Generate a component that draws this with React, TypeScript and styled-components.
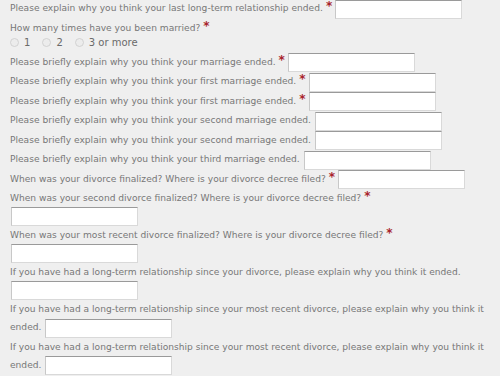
import React from 'react';
import styled, { createGlobalStyle } from 'styled-components';

const GlobalStyle = createGlobalStyle`
  html, body {
    margin: 0;
    padding: 0;
    background: #efefef;
  }
  body {
    font-family: "DejaVu Sans", "Liberation Sans", sans-serif;
  }
`;

const Form = styled.form`
  padding: 0 8px 0 10px;
  margin-top: -1px;
  color: #777777;
  font-size: 9.1px;
  line-height: 18px;
`;

const Field = styled.div`
  margin: 0;
`;

const Required = styled.span`
  margin-left: 3px;
  margin-right: -1px;
  color: #a8232b;
  font-weight: bold;
  font-size: 12px;
  line-height: 0;
  vertical-align: 1px;
`;

const TextInput = styled.input`
  box-sizing: border-box;
  width: 127px;
  height: 19px;
  margin: 0.5px 0 0 4px;
  padding: 0 4px;
  vertical-align: middle;
  background: #fff;
  border: 1px solid #d9d9d9;
  border-top: 1px solid #9a9a9a;
  border-left-color: #c8c8c8;
  border-radius: 0;
  outline: none;
`;

const BlockInput = styled(TextInput)`
  display: block;
  margin: 0 0 0 1px;
`;

const RadioRow = styled.div`
  display: flex;
  align-items: center;
  gap: 12px;
  height: 13px;
  margin: -1px 0 4px;
  line-height: 13px;
  font-size: 10px;
  color: #6a6a6a;
`;

const RadioLabel = styled.label`
  display: flex;
  align-items: center;
  gap: 5px;
`;

const RadioDot = styled.span`
  box-sizing: border-box;
  width: 9px;
  height: 9px;
  border-radius: 50%;
  border: 1px solid #d2d2d2;
  background: #ececec;
`;

type Question = {
  label: string;
  required?: boolean;
  block?: boolean;
};

const before: Question[] = [
  { label: 'Please explain why you think your last long-term relationship ended.', required: true },
];

const after: Question[] = [
  { label: 'Please briefly explain why you think your marriage ended.', required: true },
  { label: 'Please briefly explain why you think your first marriage ended.', required: true },
  { label: 'Please briefly explain why you think your first marriage ended.', required: true },
  { label: 'Please briefly explain why you think your second marriage ended.' },
  { label: 'Please briefly explain why you think your second marriage ended.' },
  { label: 'Please briefly explain why you think your third marriage ended.' },
  { label: 'When was your divorce finalized? Where is your divorce decree filed?', required: true },
  { label: 'When was your second divorce finalized? Where is your divorce decree filed?', required: true, block: true },
  { label: 'When was your most recent divorce finalized? Where is your divorce decree filed?', required: true, block: true },
  { label: 'If you have had a long-term relationship since your divorce, please explain why you think it ended.', block: true },
  { label: 'If you have had a long-term relationship since your most recent divorce, please explain why you think it ended.' },
  { label: 'If you have had a long-term relationship since your most recent divorce, please explain why you think it ended.' },
  { label: 'Please briefly explain why you think your latest relationship ended.' },
];

function QuestionField({ q }: { q: Question }) {
  return (
    <Field>
      {q.label}
      {q.required && <Required>*</Required>}
      {q.block ? <BlockInput type="text" /> : <TextInput type="text" />}
    </Field>
  );
}

export default function App() {
  return (
    <>
      <GlobalStyle />
      <Form>
        {before.map((q, i) => (
          <QuestionField key={`b${i}`} q={q} />
        ))}
        <Field>
          How many times have you been married?
          <Required>*</Required>
        </Field>
        <RadioRow>
          {['1', '2', '3 or more'].map((opt) => (
            <RadioLabel key={opt}>
              <RadioDot />
              {opt}
            </RadioLabel>
          ))}
        </RadioRow>
        {after.map((q, i) => (
          <QuestionField key={`a${i}`} q={q} />
        ))}
      </Form>
    </>
  );
}
